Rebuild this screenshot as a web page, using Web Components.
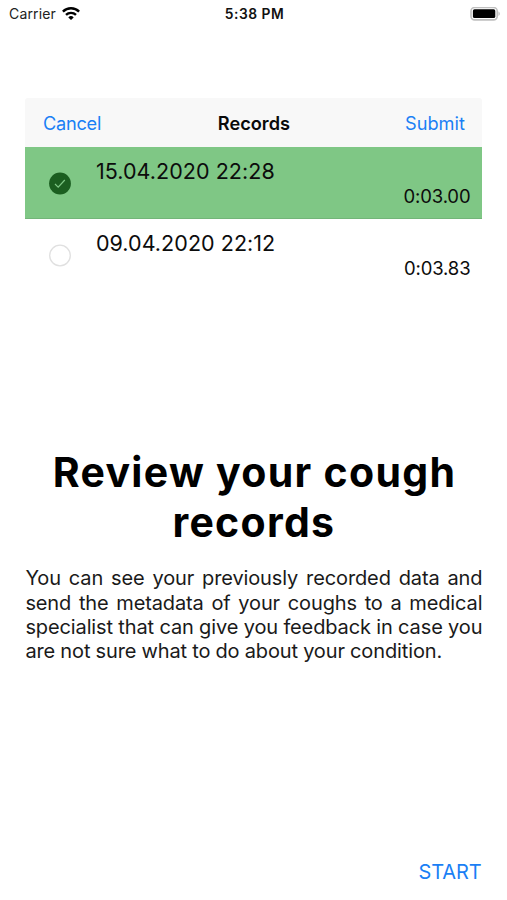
<!DOCTYPE html>
<html lang="en">
<head>
<meta charset="UTF-8">
<meta name="viewport" content="width=device-width, initial-scale=1.0">
<title>Cough records</title>
<style>
    body {
        margin: 0;
        background: #fff;
        color: #0c0c0c;
        font-family: Inter, 'Liberation Sans', sans-serif;
    }
</style>
</head>
<body>
<onboarding-page>
    <status-bar slot="status" carrier="Carrier" time="5:38 PM"></status-bar>
    <records-card slot="preview">
        <span slot="left">Cancel</span>
        <span slot="title">Records</span>
        <span slot="right">Submit</span>
        <record-row selected duration="0:03.00">15.04.2020 22:28</record-row>
        <record-row duration="0:03.83">09.04.2020 22:12</record-row>
    </records-card>
    <span slot="heading">Review your cough records</span>
    <span slot="text">You can see your previously recorded data and send the metadata of your coughs to a medical specialist that can give you feedback in case you are not sure what to do about your condition.</span>
    <span slot="action">START</span>
</onboarding-page>

<script>
class StatusBar extends HTMLElement {
    connectedCallback() {
        this.attachShadow({ mode: 'open' });
        this.shadowRoot.innerHTML = `
            <style>
                :host {
                    display: grid;
                    grid-template-columns: 1fr auto 1fr;
                    align-items: center;
                    height: 27px;
                    padding: 0 7px 0 9px;
                    font-size: 14px;
                    color: #222;
                }

                .carrier {
                    display: flex;
                    align-items: center;
                    gap: 6px;
                    letter-spacing: 0.15px;
                }

                .time {
                    font-weight: 600;
                    font-size: 13.8px;
                    letter-spacing: 0.5px;
                    color: #111;
                }

                .battery {
                    justify-self: end;
                }

                svg {
                    display: block;
                }
            </style>
            <div class="carrier">
                <span>${this.getAttribute('carrier')}</span>
                <svg width="18" height="14" viewBox="0 0 18 14" fill="none" stroke="#000" stroke-width="2.4">
                    <path d="M0.9 4.6a11.5 11.5 0 0 1 16.2 0"/>
                    <path d="M4 7.9a7.1 7.1 0 0 1 10 0"/>
                    <path d="M9 13.1L6.3 10.4a3.9 3.9 0 0 1 5.4 0z" fill="#000" stroke="none"/>
                </svg>
            </div>
            <div class="time">${this.getAttribute('time')}</div>
            <svg class="battery" width="30" height="14" viewBox="0 0 30 14">
                <rect x="1" y="0.5" width="26.2" height="12.4" rx="3.6" fill="#fff" stroke="#bfbfbf" stroke-width="1.6"/>
                <rect x="2.9" y="2.3" width="22.4" height="8.8" rx="1.6" fill="#000"/>
                <path d="M28.5 4.5c1.6 0.7 1.6 3.7 0 4.4z" fill="#b5b5b5"/>
            </svg>
        `;
    }
}

class RecordsCard extends HTMLElement {
    connectedCallback() {
        this.attachShadow({ mode: 'open' });
        this.shadowRoot.innerHTML = `
            <style>
                :host {
                    display: block;
                }

                header {
                    display: grid;
                    grid-template-columns: 1fr auto 1fr;
                    align-items: center;
                    height: 49px;
                    box-sizing: border-box;
                    padding: 1px 17.5px 0;
                    border-radius: 3px 3px 0 0;
                    background: #f8f8f8;
                    font-size: 18.2px;
                    letter-spacing: -0.25px;
                }

                .link {
                    color: #1a7ff5;
                }

                .title {
                    font-weight: 600;
                    letter-spacing: 0;
                    color: #0a0a0a;
                }

                .right {
                    justify-self: end;
                    letter-spacing: 0;
                }
            </style>
            <header>
                <div class="link"><slot name="left"></slot></div>
                <div class="title"><slot name="title"></slot></div>
                <div class="link right"><slot name="right"></slot></div>
            </header>
            <slot></slot>
        `;
    }
}

class RecordRow extends HTMLElement {
    connectedCallback() {
        const selected = this.hasAttribute('selected');
        this.attachShadow({ mode: 'open' });
        this.shadowRoot.innerHTML = `
            <style>
                :host {
                    display: grid;
                    grid-template-columns: 45.5px 1fr;
                    column-gap: 25px;
                    height: 72px;
                    box-sizing: border-box;
                    padding-right: 12px;
                }

                :host([selected]) {
                    background: #7fc785;
                    border-bottom: 1px solid #73b579;
                }

                svg {
                    display: block;
                    justify-self: end;
                    margin-top: 25px;
                }

                .info {
                    display: flex;
                    flex-direction: column;
                    padding-top: 11px;
                }

                .date {
                    font-size: 21.5px;
                    line-height: 26px;
                    letter-spacing: 0.05px;
                }

                .duration {
                    align-self: flex-end;
                    margin-top: 1px;
                    font-size: 18.5px;
                    line-height: 23px;
                    letter-spacing: -0.15px;
                }
            </style>
            <svg width="22" height="23" viewBox="0 0 22 23" fill="none">
                ${selected
                    ? '<circle cx="11" cy="11.5" r="10.9" fill="#1b5e20"/><path d="M6 12l3.2 3.2 6.6-7.2" stroke="#7fc785" stroke-width="1.2"/>'
                    : '<circle cx="11" cy="11.5" r="10.3" stroke="#e0e0e0" stroke-width="1.3"/>'}
            </svg>
            <div class="info">
                <div class="date"><slot></slot></div>
                <div class="duration">${this.getAttribute('duration')}</div>
            </div>
        `;
    }
}

class OnboardingPage extends HTMLElement {
    connectedCallback() {
        this.attachShadow({ mode: 'open' });
        this.shadowRoot.innerHTML = `
            <style>
                :host {
                    display: flex;
                    flex-direction: column;
                    height: 900px;
                    overflow: hidden;
                }

                main {
                    flex: 1;
                    display: flex;
                    flex-direction: column;
                    padding: 71px 24.6px 15px 25.4px;
                }

                .preview {
                    height: 349px;
                }

                h1 {
                    margin: 0;
                    font-size: 41px;
                    font-weight: 700;
                    line-height: 50px;
                    letter-spacing: 1.3px;
                    text-indent: 1.3px;
                    text-align: center;
                    color: #000;
                }

                p {
                    margin: 19.2px 0 0;
                    font-size: 20px;
                    line-height: 24.4px;
                    letter-spacing: -0.12px;
                    word-spacing: -0.3px;
                    text-align: justify;
                    color: #1a1a1a;
                }

                button {
                    margin: auto 1px 0 0;
                    padding: 0;
                    align-self: flex-end;
                    border: none;
                    background: none;
                    font: inherit;
                    font-size: 20px;
                    line-height: 26px;
                    letter-spacing: -0.15px;
                    color: #1a7ff5;
                }
            </style>
            <slot name="status"></slot>
            <main>
                <div class="preview"><slot name="preview"></slot></div>
                <h1><slot name="heading"></slot></h1>
                <p><slot name="text"></slot></p>
                <button><slot name="action"></slot></button>
            </main>
        `;
    }
}

customElements.define('status-bar', StatusBar);
customElements.define('records-card', RecordsCard);
customElements.define('record-row', RecordRow);
customElements.define('onboarding-page', OnboardingPage);
</script>
</body>
</html>
